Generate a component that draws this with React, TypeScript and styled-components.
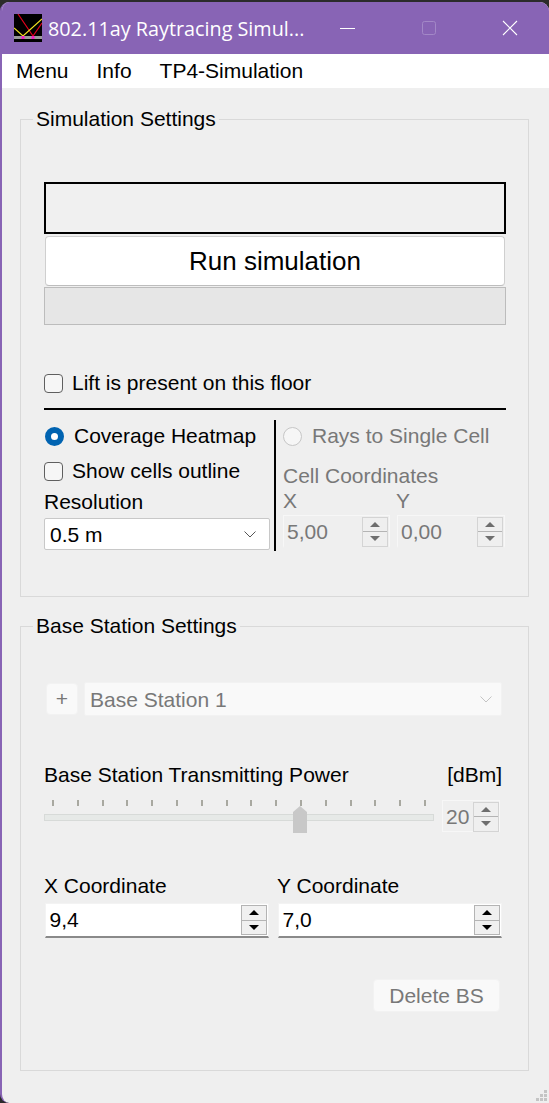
import styled, { createGlobalStyle } from "styled-components";

const GlobalStyle = createGlobalStyle`
    html, body {
        margin: 0;
        padding: 0;
        background-color: #2b2b2b;
        overflow: hidden;
    }
    * {
        box-sizing: border-box;
    }
`;

const Page = styled.div`
    width: 549px;
    height: 1103px;
    padding-top: 2px;
    background-color: #2b2b2b;
    font-family: "Liberation Sans", Arial, sans-serif;
    font-size: 21px;
    color: #000;
`;

const Window = styled.div`
    position: relative;
    height: 1101px;
    border-left: 2px solid #8864b5;
    border-radius: 9px 9px 0 9px;
    background-color: #efefef;
    overflow: hidden;
`;

const TitleBar = styled.div`
    display: flex;
    align-items: center;
    height: 52px;
    padding-left: 12px;
    background-color: #8864b5;
    color: #fff;
`;

const TitleText = styled.span`
    width: 292px;
    margin-left: 6px;
    font-family: "Open Sans", sans-serif;
    font-size: 19.8px;
    white-space: nowrap;
`;

const WindowButton = styled.button`
    display: flex;
    align-items: center;
    justify-content: center;
    width: 16px;
    height: 16px;
    margin-left: ${(p) => p.$gap}px;
    padding: 0;
    border: 0;
    background: none;
`;

const MenuBar = styled.nav`
    display: flex;
    align-items: center;
    gap: 28px;
    height: 34px;
    padding-left: 14px;
    background-color: #fff;
`;

const MenuItem = styled.span`
    font-size: 21px;
`;

const Content = styled.div`
    padding: 19px 18px 0 18px;
`;

const Group = styled.fieldset`
    width: 509px;
    height: ${(p) => p.$height}px;
    margin: 0 0 ${(p) => p.$bottom}px 0;
    padding: ${(p) => p.$top}px 22px 0 23px;
    border: 1px solid #d9d9d9;
    min-width: 0;
`;

const GroupTitle = styled.legend`
    margin-left: -11px;
    padding: 0 3px;
    line-height: 24px;
    font-size: 21px;
`;

const StatusBox = styled.div`
    height: 52px;
    border: 2px solid #000;
    background-color: #f0f0f0;
`;

const RunButton = styled.button`
    display: block;
    width: 460px;
    height: 50px;
    margin: 2px 1px 1px 1px;
    border: 1px solid #cfcfcf;
    border-bottom-color: #bdbdbd;
    border-radius: 4px;
    background-color: #fff;
    font-family: inherit;
    font-size: 26px;
    color: #000;
`;

const ProgressBar = styled.div`
    height: 38px;
    border: 1px solid #bcbcbc;
    background-color: #e6e6e6;
`;

const Row = styled.label`
    display: flex;
    align-items: center;
    gap: ${(p) => p.$gap ?? 9}px;
    height: 24px;
    margin-top: ${(p) => p.$mt ?? 0}px;
    color: ${(p) => (p.$dim ? "#787878" : "#000")};
`;

const CheckBox = styled.span`
    flex: none;
    width: 19px;
    height: 19px;
    border: 1px solid #5f5f5f;
    border-radius: 4px;
    background-color: #f6f6f6;
`;

const RadioOn = styled.span`
    flex: none;
    width: 19px;
    height: 19px;
    margin-left: 1px;
    border: 6px solid #0063b1;
    border-radius: 50%;
    background-color: #fff;
`;

const RadioOff = styled.span`
    flex: none;
    width: 19px;
    height: 19px;
    border: 1px solid #c6c6c6;
    border-radius: 50%;
    background-color: #f6f6f6;
`;

const Rule = styled.div`
    height: 2px;
    margin-top: 13px;
    background-color: #000;
`;

const Modes = styled.div`
    display: grid;
    grid-template-columns: 230px 2px 1fr;
    height: 131px;
    margin-top: 10px;
`;

const LeftColumn = styled.div`
    padding-top: 4px;
`;

const Divider = styled.div`
    background-color: #000;
`;

const RightColumn = styled.div`
    padding: 4px 0 0 7px;
    color: #787878;
`;

const FieldLabel = styled.div`
    height: 24px;
    line-height: 24px;
    margin-top: ${(p) => p.$mt ?? 0}px;
`;

const Select = styled.div`
    display: flex;
    align-items: center;
    justify-content: space-between;
    width: ${(p) => p.$width}px;
    height: ${(p) => p.$height}px;
    margin-top: ${(p) => p.$mt ?? 0}px;
    padding: 1px ${(p) => (p.$dim ? 9 : 13)}px 0 5px;
    border: 1px solid ${(p) => (p.$dim ? "#f2f2f2" : "#c8c8c8")};
    border-radius: 2px;
    background-color: ${(p) => (p.$dim ? "#f9f9f9" : "#fff")};
    color: ${(p) => (p.$dim ? "#787878" : "#000")};
`;

const CellSpinners = styled.div`
    display: grid;
    grid-template-columns: 107px 108px;
    gap: 7px;
    margin-top: 2px;
`;

const CellHeads = styled.div`
    display: grid;
    grid-template-columns: 113px 1fr;
`;

const SpinField = styled.div`
    display: flex;
    align-items: center;
    justify-content: space-between;
    height: ${(p) => p.$height}px;
    padding: ${(p) => (p.$active ? "0 1px 0 3.5px" : "1px 1px 0 3px")};
    border-bottom: 2px solid ${(p) => (p.$active ? "#8a8a8a" : "#efefef")};
    border-top: 1px solid ${(p) => (p.$active ? "#f3f3f3" : "#f7f7f7")};
    border-left: 1px solid ${(p) => (p.$active ? "#f3f3f3" : "#f7f7f7")};
    border-right: 1px solid ${(p) => (p.$active ? "#f3f3f3" : "#f7f7f7")};
    background-color: ${(p) => (p.$active ? "#fff" : "#efefef")};
    color: ${(p) => (p.$active ? "#000" : "#787878")};
`;

const Stepper = styled.div`
    display: flex;
    flex-direction: column;
    flex: none;
    width: 26px;
    height: 30px;
    border: 1px solid ${(p) => (p.$active ? "#b4b4b4" : "#d4d4d4")};
    background-color: ${(p) => (p.$active ? "#f0f0f0" : "#efefef")};
`;

const StepHalf = styled.div`
    display: flex;
    flex: 1;
    align-items: center;
    justify-content: center;
    & + & {
        border-top: 1px solid ${(p) => (p.$active ? "#b4b4b4" : "#d4d4d4")};
    }
`;

const ArrowUp = styled.span`
    width: 0;
    height: 0;
    border-left: 5px solid transparent;
    border-right: 5px solid transparent;
    border-bottom: 5px solid ${(p) => (p.$active ? "#000" : "#6e6e6e")};
`;

const ArrowDown = styled.span`
    width: 0;
    height: 0;
    border-left: 5px solid transparent;
    border-right: 5px solid transparent;
    border-top: 5px solid ${(p) => (p.$active ? "#000" : "#6e6e6e")};
`;

const StationRow = styled.div`
    display: flex;
    align-items: center;
    gap: 6px;
    margin-left: 2px;
`;

const PlusButton = styled.button`
    width: 32px;
    height: 32px;
    padding: 0;
    border: 1px solid #f2f2f2;
    border-radius: 4px;
    background-color: #f9f9f9;
    font-family: inherit;
    font-size: 21px;
    color: #787878;
`;

const PowerHead = styled.div`
    display: flex;
    justify-content: space-between;
    width: 458px;
    height: 24px;
    line-height: 24px;
    margin-top: 47px;
`;

const PowerRow = styled.div`
    display: flex;
    justify-content: space-between;
    width: 456px;
    height: 32px;
    margin-top: 13px;
`;

const SliderBox = styled.div`
    position: relative;
    width: 390px;
    height: 32px;
`;

const Ticks = styled.div`
    display: flex;
    justify-content: space-between;
    padding: 0 8px;
`;

const Tick = styled.span`
    width: 2px;
    height: 6px;
    background-color: #a8a8a0;
`;

const Track = styled.div`
    height: 7px;
    margin-top: 8px;
    border: 1px solid #d7dad8;
    background-color: #e6e9e7;
`;

const Thumb = styled.svg`
    position: absolute;
    left: 249px;
    top: 6px;
`;

const PowerSpin = styled.div`
    display: flex;
    align-items: center;
    justify-content: space-between;
    width: 58px;
    height: 32px;
    padding: 1px 0 0 3px;
    border: 1px solid #f7f7f7;
    color: #787878;
`;

const CoordHeads = styled.div`
    display: grid;
    grid-template-columns: 233px 1fr;
    height: 24px;
    line-height: 24px;
    margin-top: 42px;
`;

const CoordInputs = styled.div`
    display: grid;
    grid-template-columns: 224px 224px;
    gap: 9px;
    margin: 5px 0 0 1px;
`;

const Actions = styled.div`
    display: flex;
    justify-content: flex-end;
    width: 456px;
    margin-top: 41px;
`;

const DeleteButton = styled.button`
    width: 127px;
    height: 33px;
    padding: 0;
    border: 1px solid #f2f2f2;
    border-radius: 4px;
    background-color: #f9f9f9;
    font-family: inherit;
    font-size: 21px;
    color: #787878;
`;

const Grip = styled.svg`
    position: absolute;
    right: 1px;
    bottom: 1px;
`;

function AppIcon() {
    return (
        <svg width="28" height="28" viewBox="0 0 28 28">
            <rect width="28" height="28" fill="#000" />
            <rect y="22" width="28" height="3" fill="#9a9a9a" />
            <path d="M4 0 L19 22 L28 9" fill="none" stroke="#e0001c" strokeWidth="1.2" />
            <path d="M0 14 L9 22 L28 5" fill="none" stroke="#f0e020" strokeWidth="1.2" />
            <rect x="7.5" y="22" width="3" height="3" fill="#f020c0" />
            <rect x="17.5" y="22" width="3" height="3" fill="#f020c0" />
        </svg>
    );
}

function Chevron({ color }: { color: string }) {
    return (
        <svg width="12" height="7" viewBox="0 0 12 7">
            <path d="M0.5 0.5 L6 6 L11.5 0.5" fill="none" stroke={color} strokeWidth="1" />
        </svg>
    );
}

function Steps({ active }: { active?: boolean }) {
    return (
        <Stepper $active={active}>
            <StepHalf $active={active}>
                <ArrowUp $active={active} />
            </StepHalf>
            <StepHalf $active={active}>
                <ArrowDown $active={active} />
            </StepHalf>
        </Stepper>
    );
}

const TICK_COUNT = 16;

export default function App() {
    return (
        <Page>
            <GlobalStyle />
            <Window>
                <TitleBar>
                    <AppIcon />
                    <TitleText>802.11ay Raytracing Simul...</TitleText>
                    <WindowButton $gap={0}>
                        <svg width="16" height="16" viewBox="0 0 16 16">
                            <path d="M0 8.5 H15" stroke="#fff" strokeWidth="1" />
                        </svg>
                    </WindowButton>
                    <WindowButton $gap={65}>
                        <svg width="16" height="16" viewBox="0 0 16 16">
                            <rect x="1.5" y="1.5" width="13" height="13" rx="2" fill="none" stroke="#a388c7" strokeWidth="1" />
                        </svg>
                    </WindowButton>
                    <WindowButton $gap={65}>
                        <svg width="16" height="16" viewBox="0 0 16 16">
                            <path d="M1 1 L15 15 M15 1 L1 15" stroke="#fff" strokeWidth="1.1" />
                        </svg>
                    </WindowButton>
                </TitleBar>
                <MenuBar>
                    <MenuItem>Menu</MenuItem>
                    <MenuItem>Info</MenuItem>
                    <MenuItem>TP4-Simulation</MenuItem>
                </MenuBar>
                <Content>
                    <Group $height={490} $bottom={17} $top={51}>
                        <GroupTitle>Simulation Settings</GroupTitle>
                        <StatusBox />
                        <RunButton>Run simulation</RunButton>
                        <ProgressBar />
                        <Row $mt={46}>
                            <CheckBox />
                            Lift is present on this floor
                        </Row>
                        <Rule />
                        <Modes>
                            <LeftColumn>
                                <Row $gap={10}>
                                    <RadioOn />
                                    Coverage Heatmap
                                </Row>
                                <Row $mt={11}>
                                    <CheckBox />
                                    Show cells outline
                                </Row>
                                <FieldLabel $mt={7}>Resolution</FieldLabel>
                                <Select $width={226} $height={32} $mt={4}>
                                    0.5 m
                                    <Chevron color="#555" />
                                </Select>
                            </LeftColumn>
                            <Divider />
                            <RightColumn>
                                <Row $gap={10} $dim>
                                    <RadioOff />
                                    Rays to Single Cell
                                </Row>
                                <FieldLabel $mt={16}>Cell Coordinates</FieldLabel>
                                <CellHeads>
                                    <FieldLabel $mt={1}>X</FieldLabel>
                                    <FieldLabel $mt={1}>Y</FieldLabel>
                                </CellHeads>
                                <CellSpinners>
                                    <SpinField $height={33}>
                                        5,00
                                        <Steps />
                                    </SpinField>
                                    <SpinField $height={33}>
                                        0,00
                                        <Steps />
                                    </SpinField>
                                </CellSpinners>
                            </RightColumn>
                        </Modes>
                    </Group>
                    <Group $height={457} $bottom={0} $top={44}>
                        <GroupTitle>Base Station Settings</GroupTitle>
                        <StationRow>
                            <PlusButton>+</PlusButton>
                            <Select $width={418} $height={34} $dim>
                                Base Station 1
                                <Chevron color="#c4c4c4" />
                            </Select>
                        </StationRow>
                        <PowerHead>
                            <span>Base Station Transmitting Power</span>
                            <span>[dBm]</span>
                        </PowerHead>
                        <PowerRow>
                            <SliderBox>
                                <Ticks>
                                    {Array.from({ length: TICK_COUNT }, (_, i) => (
                                        <Tick key={i} />
                                    ))}
                                </Ticks>
                                <Track />
                                <Thumb width="14" height="27" viewBox="0 0 14 27">
                                    <path d="M0 6 L7 0 L14 6 V27 H0 Z" fill="#c8c8c8" />
                                </Thumb>
                            </SliderBox>
                            <PowerSpin>
                                20
                                <Steps />
                            </PowerSpin>
                        </PowerRow>
                        <CoordHeads>
                            <span>X Coordinate</span>
                            <span>Y Coordinate</span>
                        </CoordHeads>
                        <CoordInputs>
                            <SpinField $height={35} $active>
                                9,4
                                <Steps active />
                            </SpinField>
                            <SpinField $height={35} $active>
                                7,0
                                <Steps active />
                            </SpinField>
                        </CoordInputs>
                        <Actions>
                            <DeleteButton>Delete BS</DeleteButton>
                        </Actions>
                    </Group>
                </Content>
                <Grip width="12" height="12" viewBox="0 0 12 12" fill="#c4c4c4">
                    <rect x="8" y="0" width="3" height="3" />
                    <rect x="4" y="4" width="3" height="3" />
                    <rect x="8" y="4" width="3" height="3" />
                    <rect x="0" y="8" width="3" height="3" />
                    <rect x="4" y="8" width="3" height="3" />
                    <rect x="8" y="8" width="3" height="3" />
                </Grip>
            </Window>
        </Page>
    );
}
